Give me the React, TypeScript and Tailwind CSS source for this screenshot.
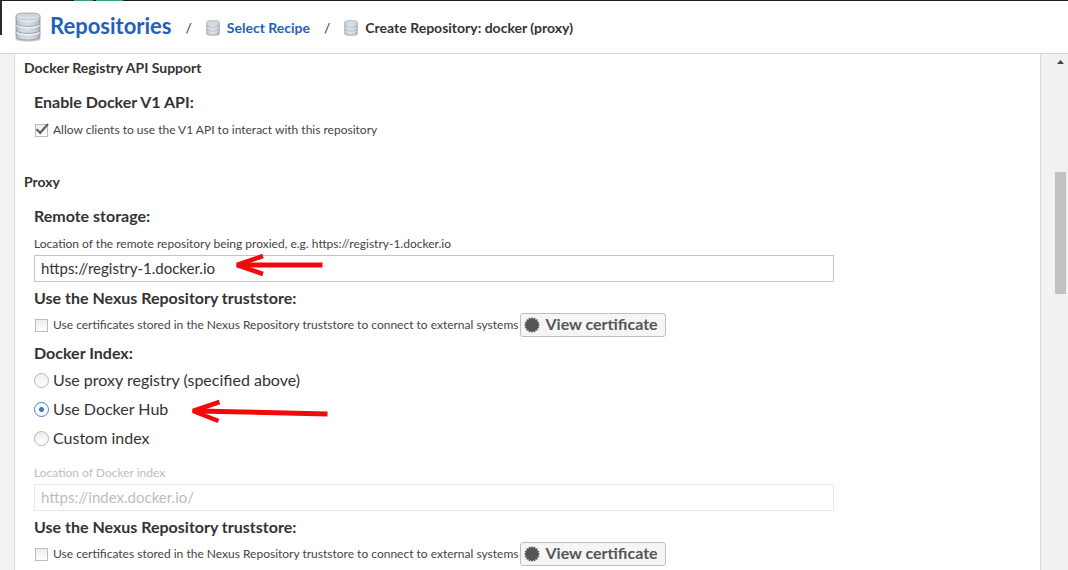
import type { ReactNode } from "react";

function DatabaseIcon({ className }: { className: string }) {
  return (
    <svg viewBox="0 0 26 30" className={className} aria-hidden="true">
      <defs>
        <linearGradient id="db-side" x1="0" x2="1" y1="0" y2="0">
          <stop offset="0" stopColor="#a9b1bc" />
          <stop offset="0.2" stopColor="#cdd5df" />
          <stop offset="0.5" stopColor="#d6dee8" />
          <stop offset="0.8" stopColor="#c6ced9" />
          <stop offset="1" stopColor="#a3aab5" />
        </linearGradient>
        <linearGradient id="db-top" x1="0" x2="0" y1="0" y2="1">
          <stop offset="0" stopColor="#c6ced8" />
          <stop offset="1" stopColor="#dfe5ec" />
        </linearGradient>
      </defs>
      <ellipse cx="13" cy="27" rx="12.6" ry="2.8" fill="#9a9a9a" opacity="0.5" />
      <path d="M1 4V25C1 29 25 29 25 25V4Z" fill="url(#db-side)" stroke="#8f96a1" strokeWidth="0.8" />
      <path d="M1.3 12C2 15.2 24 15.2 24.7 12M1.3 19C2 22.2 24 22.2 24.7 19" fill="none" stroke="#8f96a1" strokeWidth="0.9" />
      <path d="M1.6 13.3C3 16.4 23 16.4 24.4 13.3M1.6 20.3C3 23.4 23 23.4 24.4 20.3" fill="none" stroke="#f5f8fb" strokeWidth="1.2" />
      <path d="M1 4.5C1 1.5 4 1 13 1S25 1.5 25 4.5C25 7.5 21 8 13 8S1 7.5 1 4.5Z" fill="url(#db-top)" stroke="#989fa9" strokeWidth="0.8" />
      <path d="M2 7.2C4 9.5 22 9.5 24 7.2" fill="none" stroke="#f5f8fb" strokeWidth="1" />
    </svg>
  );
}

function CertificateIcon() {
  return (
    <svg viewBox="0 0 16 16" className="size-4 shrink-0" fill="#555" aria-hidden="true">
      <path d="M8 0 9.2 1.7 11.1.6 11.5 2.7 13.7 2.3 13.3 4.5 15.4 4.9 14.3 6.8 16 8 14.3 9.2 15.4 11.1 13.3 11.5 13.7 13.7 11.5 13.3 11.1 15.4 9.2 14.3 8 16 6.8 14.3 4.9 15.4 4.5 13.3 2.3 13.7 2.7 11.5.6 11.1 1.7 9.2 0 8 1.7 6.8.6 4.9 2.7 4.5 2.3 2.3 4.5 2.7 4.9.6 6.8 1.7Z" />
    </svg>
  );
}

function SectionTitle({ children }: { children: ReactNode }) {
  return <h2 className="text-[14px] leading-7 font-bold">{children}</h2>;
}

function FieldTitle({ children }: { children: ReactNode }) {
  return <h3 className="text-[16px] leading-[18px] font-bold">{children}</h3>;
}

function CheckField({ id, text, checked }: { id: string; text: string; checked?: boolean }) {
  return (
    <div className="flex items-center">
      <span className="relative ml-px flex size-[13px]">
        <input
          id={id}
          type="checkbox"
          defaultChecked={checked}
          className="peer size-[13px] appearance-none border border-[#bcbcbc] bg-linear-to-b from-[#ececec] to-white"
        />
        <svg
          viewBox="0 0 15 13"
          className="pointer-events-none absolute -top-px left-0 hidden h-[13px] w-[15px] peer-checked:block"
          aria-hidden="true"
        >
          <path d="M1.5 6.3 5.2 9.8 13 1" fill="none" stroke="#606060" strokeWidth="2.2" />
        </svg>
      </span>
      <label htmlFor={id} className="ml-[5px] text-[12px] leading-5 text-[#444]">
        {text}
      </label>
    </div>
  );
}

function TruststoreField({ id }: { id: string }) {
  return (
    <section className="mt-[7px]">
      <FieldTitle>Use the Nexus Repository truststore:</FieldTitle>
      <div className="mt-[6px] flex items-center gap-[2px]">
        <CheckField
          id={id}
          text="Use certificates stored in the Nexus Repository truststore to connect to external systems"
        />
        <button
          type="button"
          className="flex h-6 items-center gap-[5px] rounded-[3px] border border-[#bfbfbf] bg-[#f5f5f5] pr-[7px] pl-[3px] text-[16px] leading-5 font-bold text-[#555]"
        >
          <CertificateIcon />
          <span className="pb-[2px]">View certificate</span>
        </button>
      </div>
    </section>
  );
}

function RadioField({ id, text, checked, children }: { id: string; text: string; checked?: boolean; children?: ReactNode }) {
  return (
    <div className="relative flex h-[29px] items-center">
      <input
        id={id}
        name="docker-index"
        type="radio"
        defaultChecked={checked}
        className="size-[15px] appearance-none rounded-full border border-[#b5b5b5] bg-linear-to-b from-[#eeeeee] to-white checked:border-[#4a7fd6] checked:bg-[radial-gradient(circle,#3c6fd0_2px,#ffffff_3px)]"
      />
      <label htmlFor={id} className="ml-1 pb-[2px] text-[16px] leading-5">
        {text}
      </label>
      {children}
    </div>
  );
}

export default function App() {
  return (
    <div className="flex h-screen flex-col overflow-hidden bg-[#f2f2f2] font-['Lato','Liberation_Sans',sans-serif] text-[#333]">
      <div className="flex h-px shrink-0 gap-[3px] bg-[#1c1b20] pl-[74px]">
        <span className="w-[19px] bg-[#2f9c84]" />
        <span className="w-[27px] bg-[#2f9c84]" />
      </div>
      <header className="flex h-[53px] shrink-0 border-b border-[#d6d6d6] bg-white">
        <div className="h-[34px] w-[2px] bg-[#2a292e]" />
        <nav aria-label="Breadcrumb" className="flex flex-1 items-center pb-px pl-[13px] text-[14px] font-bold">
          <DatabaseIcon className="h-[30px] w-[26px]" />
          <a href="#repositories" className="ml-[9px] pb-[2px] text-[22px] leading-7 text-[#2361b8]">
            Repositories
          </a>
          <span className="mt-[2px] ml-[14px] font-normal">/</span>
          <DatabaseIcon className="mt-[2px] ml-[14px] h-4 w-[14px]" />
          <a href="#recipe" className="mt-[2px] ml-[7px] text-[#2361b8]">
            Select Recipe
          </a>
          <span className="mt-[2px] ml-[14px] font-normal">/</span>
          <DatabaseIcon className="mt-[2px] ml-[14px] h-4 w-[14px]" />
          <span className="mt-[2px] ml-[7px]">Create Repository: docker (proxy)</span>
        </nav>
      </header>

      <div className="flex min-h-0 flex-1">
        <main className="mr-[13px] ml-[14px] min-w-0 flex-1 overflow-hidden border-x border-[#d9d9d9] bg-white pl-[9px]">
          <SectionTitle>Docker Registry API Support</SectionTitle>
          <div className="mt-[11px] pl-[10px]">
            <FieldTitle>Enable Docker V1 API:</FieldTitle>
            <div className="mt-[9px]">
              <CheckField id="v1-api" text="Allow clients to use the V1 API to interact with this repository" checked />
            </div>
          </div>

          <div className="mt-7">
            <SectionTitle>Proxy</SectionTitle>
          </div>
          <div className="mt-[11px] pl-[10px]">
            <FieldTitle>
              <label htmlFor="remote">Remote storage:</label>
            </FieldTitle>
            <p className="mt-[9px] text-[12px] leading-5 text-[#444]">
              Location of the remote repository being proxied, e.g. https://registry-1.docker.io
            </p>
            <div className="relative mt-px max-w-[800px]">
              <input
                id="remote"
                type="text"
                defaultValue="https://registry-1.docker.io"
                className="block h-[27px] w-full border border-[#c4c4c4] bg-white px-[6px] pb-[2px] text-[15px]"
              />
              <svg
                viewBox="0 0 90 24"
                className="pointer-events-none absolute -top-[2px] left-[200px] h-6 w-[90px]"
                fill="none"
                stroke="#f00a0a"
                aria-hidden="true"
              >
                <path d="M88.5 12H7" strokeWidth="5" />
                <path d="M29 3 3 12 29 21" strokeWidth="4.5" strokeLinejoin="bevel" />
              </svg>
            </div>

            <TruststoreField id="truststore-remote" />

            <section className="mt-[7px]">
              <FieldTitle>Docker Index:</FieldTitle>
              <div className="mt-1">
                <RadioField id="index-proxy" text="Use proxy registry (specified above)" />
                <RadioField id="index-hub" text="Use Docker Hub" checked>
                  <svg
                    viewBox="0 0 140 26"
                    className="pointer-events-none absolute top-1 left-[156px] h-[26px] w-[140px]"
                    fill="none"
                    stroke="#f00a0a"
                    aria-hidden="true"
                  >
                    <path d="M137.5 15 7 12" strokeWidth="5" />
                    <path d="M29.5 3 3 12 28.5 22" strokeWidth="4.5" strokeLinejoin="bevel" />
                  </svg>
                </RadioField>
                <RadioField id="index-custom" text="Custom index" />
              </div>
            </section>

            <label htmlFor="index-url" className="mt-[10px] block text-[12px] leading-5 text-[#bdbdbd]">
              Location of Docker index
            </label>
            <input
              id="index-url"
              type="text"
              disabled
              defaultValue="https://index.docker.io/"
              className="mt-px block h-[27px] w-full max-w-[800px] border border-[#e8e8e8] bg-white px-[6px] pb-[2px] text-[15px] text-[#bdbdbd]"
            />

            <TruststoreField id="truststore-index" />
          </div>
        </main>
        <div className="flex w-[14px] flex-col items-center bg-[#f0f0f0] pt-[6px] pr-[2px]" aria-hidden="true">
          <svg viewBox="0 0 7 4" className="h-1 w-[7px]" fill="#444">
            <path d="M0 4 3.5 0 7 4Z" />
          </svg>
          <div className="mt-[108px] h-[122px] w-[11px] bg-[#c1c1c1]" />
        </div>
      </div>
    </div>
  );
}
